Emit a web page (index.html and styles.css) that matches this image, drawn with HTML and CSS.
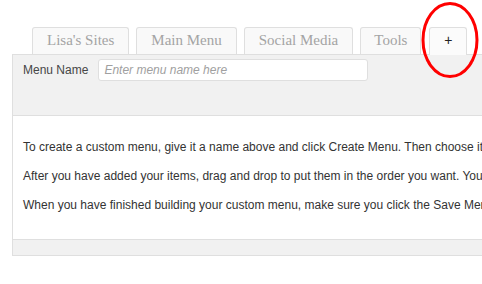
FILE: index.html
```html
<!DOCTYPE html>
<html lang="en">
<head>
  <meta charset="UTF-8" />
  <title>Menus</title>
  <link rel="stylesheet" href="styles.css">
</head>
<body>
  <div class="wrap">
    <div class="tabs">
      <a class="tab">Lisa's Sites</a>
      <a class="tab">Main Menu</a>
      <a class="tab">Social Media</a>
      <a class="tab tab-short">Tools</a>
      <a class="tab tab-add active">+</a>
    </div>

    <div class="menu-edit">
      <div class="menu-header">
        <label class="menu-label" for="menuName">Menu Name</label>
        <input class="menu-input" id="menuName" type="text" placeholder="Enter menu name here" />
      </div>
      <div class="menu-body">
        <p>To create a custom menu, give it a name above and click Create Menu. Then choose items like pages, categories or custom links from the left column to add to this menu.</p>
        <p>After you have added your items, drag and drop to put them in the order you want. You can also click each item to reveal additional configuration options.</p>
        <p>When you have finished building your custom menu, make sure you click the Save Menu button.</p>
      </div>
      <div class="menu-footer"></div>
    </div>

    <!-- highlight circle -->
    <svg class="highlight" width="62" height="80" viewBox="0 0 62 80">
      <ellipse cx="30" cy="40" rx="27" ry="36.5" fill="none" stroke="#ff0000" stroke-width="3" />
    </svg>
  </div>
</body>
</html>
```

FILE: styles.css
```css
html, body {
  margin: 0;
  padding: 0;
  background: #fff;
  overflow: hidden;
}

body {
  font-family: 'Liberation Sans', Arial, sans-serif;
  font-size: 12px;
  color: #333;
}

.wrap {
  position: relative;
  padding-top: 27px;
  width: 482px;
  height: 257px;
  overflow: hidden;
}

.tabs {
  display: flex;
  gap: 7px;
  margin-left: 32px;
  height: 27px;
  position: relative;
  z-index: 1;
}

.tab {
  box-sizing: border-box;
  height: 27px;
  padding: 0 14px;
  border: 1px solid #dfdfdf;
  border-bottom: none;
  border-radius: 3px 3px 0 0;
  background: #f9f9f9;
  font-family: 'Liberation Serif', Georgia, serif;
  font-size: 15px;
  line-height: 25px;
  color: #a4a4a4;
  white-space: nowrap;
}

.tab-short {
  padding: 0 13px;
}

.tab-add {
  margin-left: 1px;
  width: 38px;
  padding: 0;
  text-align: center;
  font-family: 'Liberation Sans', Arial, sans-serif;
  font-size: 14px;
  color: #222;
}

.tab.active {
  background: #fbfbfb;
  height: 28px;
}

.menu-edit {
  margin-left: 12px;
  width: 600px;
  border: 1px solid #dfdfdf;
  border-right: none;
}

.menu-header {
  display: flex;
  align-items: flex-start;
  gap: 10px;
  height: 61px;
  box-sizing: border-box;
  padding: 4px 10px;
  background: #f1f1f1;
  border-bottom: 1px solid #dfdfdf;
}

.menu-label {
  line-height: 22px;
  color: #464646;
}

.menu-input {
  box-sizing: border-box;
  width: 270px;
  height: 22px;
  margin: 0;
  padding: 2px 5px;
  border: 1px solid #dfdfdf;
  border-radius: 3px;
  background: #fff;
  font-family: 'Liberation Sans', Arial, sans-serif;
  font-size: 12px;
}

.menu-input::placeholder {
  font-style: italic;
  color: #a0a0a0;
}

.menu-body {
  padding: 23px 10px 13px;
  background: #fff;
  border-bottom: 1px solid #dfdfdf;
  white-space: nowrap;
}

.menu-body p {
  margin: 0 0 12px;
  line-height: 17px;
}

.menu-footer {
  height: 15px;
  background: #f1f1f1;
}

.highlight {
  position: absolute;
  left: 420px;
  top: 0;
  z-index: 2;
}
```
